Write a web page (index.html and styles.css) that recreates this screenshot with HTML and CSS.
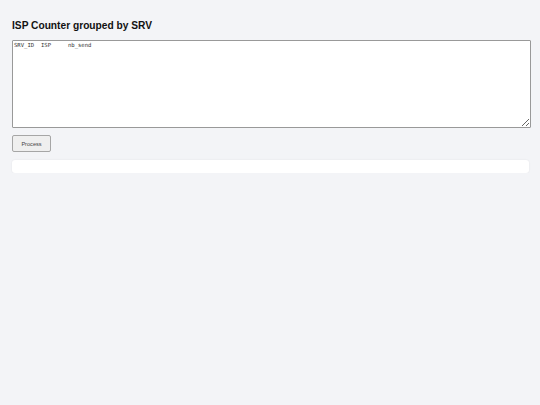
FILE: index.html
```html
<!DOCTYPE html>
<html>
<head>
<meta charset="utf-8">
<link rel="stylesheet" href="styles.css">
</head>
<body>
<div class="page">
  <h1 class="title">ISP Counter grouped by SRV</h1>
  <textarea class="input">SRV_ID	ISP	nb_send</textarea>
  <div class="actions"><button class="btn">Process</button></div>
  <div class="result"></div>
</div>
</body>
</html>
```
FILE: styles.css
```css
html, body {
  margin: 0;
  padding: 0;
  background: #f3f4f7;
}
.page {
  padding: 12px 12px 0 12px;
  font-family: "Liberation Sans", Arial, sans-serif;
  display: flex;
  flex-direction: column;
  align-items: flex-start;
}
.title {
  margin: 7px 0 0 0;
  font-size: 10.2px;
  font-weight: bold;
  color: #111;
  line-height: 14px;
}
.input {
  display: block;
  margin-top: 7px;
  box-sizing: border-box;
  width: 519px;
  height: 88px;
  font-family: "DejaVu Sans Mono", monospace;
  font-size: 5.6px;
  line-height: 7px;
  padding: 1px 0 1px 1px;
  border: 1px solid #999;
  border-radius: 1px;
  background: #fff;
  color: #333;
  tab-size: 8;
  resize: vertical;
}
.actions {
  margin-top: 7px;
  display: flex;
}
.btn {
  box-sizing: border-box;
  width: 39px;
  height: 17px;
  font-family: "Liberation Sans", Arial, sans-serif;
  font-size: 5.6px;
  background: #efefef;
  border: 1px solid #a6a6a6;
  border-radius: 2px;
  color: #444;
  padding: 0;
}
.result {
  margin-top: 8px;
  box-sizing: border-box;
  width: 517px;
  height: 13px;
  background: #fff;
  border-radius: 3px;
  box-shadow: 0 0 2px rgba(0,0,0,0.08);
}
```
